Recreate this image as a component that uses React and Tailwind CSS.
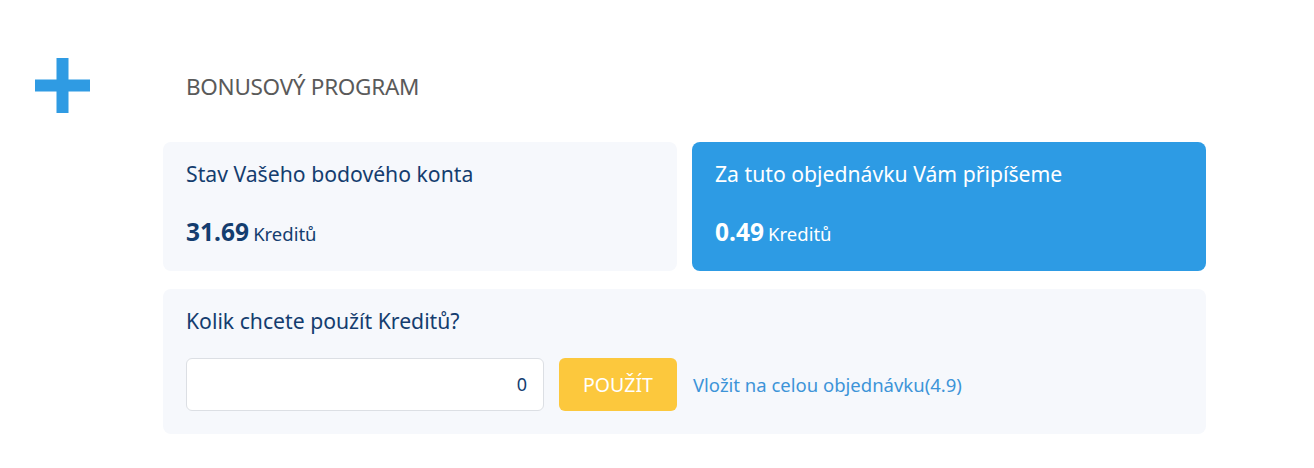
import React from 'react';

const font = { fontFamily: '"Noto Sans", "Open Sans", sans-serif' };

export default function App() {
    return (
        <div className="w-[1314px] h-[468px] bg-white relative" style={font}>
            <div className="flex pt-[58px]">
                {/* plus mark */}
                <div className="w-[163px] pl-[35px]">
                    <svg width="55" height="55" viewBox="0 0 55 55">
                        <rect x="21.5" y="0" width="12" height="55" fill="#2f9be3" />
                        <rect x="0" y="21.5" width="55" height="12" fill="#2f9be3" />
                    </svg>
                </div>

                <div className="w-[1043px] flex flex-col">
                    <h2 className="pl-[23px] mt-[16px] text-[22.5px] leading-[26px] text-[#5a5a5a] tracking-[-0.3px]">
                        BONUSOVÝ PROGRAM
                    </h2>

                    <div className="grid grid-cols-2 gap-[15px] mt-[42px]">
                        <div className="h-[129px] bg-[#f6f8fc] rounded-lg px-[23px] pt-[19px]">
                            <p className="text-[21.2px] leading-[26px] text-[#143d6f]">Stav Vašeho bodového konta</p>
                            <p className="mt-[32px] text-[#143d6f] leading-[26px]">
                                <span className="text-[24.5px] font-bold">31.69</span>{' '}
                                <span className="text-[18.5px]">Kreditů</span>
                            </p>
                        </div>
                        <div className="h-[129px] bg-[#2d9be4] rounded-lg px-[23px] pt-[19px]">
                            <p className="text-[21.2px] leading-[26px] text-white">Za tuto objednávku Vám připíšeme</p>
                            <p className="mt-[32px] text-white leading-[26px]">
                                <span className="text-[24.5px] font-bold">0.49</span>{' '}
                                <span className="text-[18.5px]">Kreditů</span>
                            </p>
                        </div>
                    </div>

                    <div className="mt-[18px] h-[145px] bg-[#f6f8fc] rounded-lg px-[23px] pt-[19px]">
                        <p className="text-[21.2px] leading-[26px] text-[#143d6f]">Kolik chcete použít Kreditů?</p>
                        <div className="flex items-center mt-[24px]">
                            <div className="w-[358px] h-[53px] bg-white border border-[#dcdfe4] rounded-md flex items-center justify-end pr-[16px] text-[18px] text-[#143d6f]">
                                0
                            </div>
                            <button className="ml-[15px] w-[118px] h-[53px] bg-[#fcc83d] rounded-md text-white text-[19.5px]">
                                POUŽÍT
                            </button>
                            <span className="ml-[16px] text-[18.5px] text-[#3d94d8]">Vložit na celou objednávku(4.9)</span>
                        </div>
                    </div>
                </div>
            </div>
        </div>
    );
}
